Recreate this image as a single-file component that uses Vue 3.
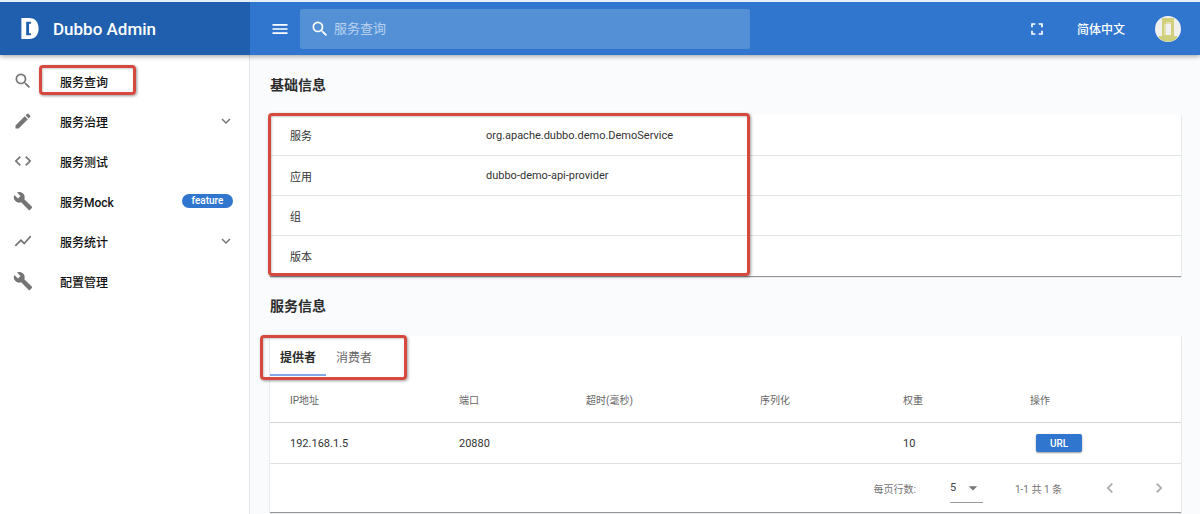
<script setup>
import { ref } from 'vue'

const icons = {
  search: 'M15.5 14h-.79l-.28-.27A6.47 6.47 0 0 0 16 9.5 6.5 6.5 0 1 0 9.5 16c1.61 0 3.09-.59 4.23-1.57l.27.28v.79l5 4.99L20.49 19l-4.99-5zm-6 0C7.01 14 5 11.99 5 9.5S7.01 5 9.5 5 14 7.01 14 9.5 11.99 14 9.5 14z',
  edit: 'M3 17.25V21h3.75L17.81 9.94l-3.75-3.75L3 17.25zM20.71 7.04a1 1 0 0 0 0-1.41l-2.34-2.34a1 1 0 0 0-1.41 0l-1.83 1.83 3.75 3.75 1.83-1.83z',
  code: 'M9.4 16.6L4.8 12l4.6-4.6L8 6l-6 6 6 6 1.4-1.4zm5.2 0l4.6-4.6-4.6-4.6L16 6l6 6-6 6-1.4-1.4z',
  build: 'M22.7 19l-9.1-9.1c.9-2.3.4-5-1.5-6.9-2-2-5-2.4-7.4-1.3L9 6 6 9 1.6 4.7C.4 7.1.9 10.1 2.9 12.1c1.9 1.9 4.6 2.4 6.9 1.5l9.1 9.1c.4.4 1 .4 1.4 0l2.3-2.3c.5-.4.5-1.1.1-1.4z',
  chart: 'M3.5 18.49l6-6.01 4 4L22 6.92l-1.41-1.41-7.09 7.97-4-4L2 16.99z',
  down: 'M7.41 8.59L12 13.17l4.59-4.58L18 10l-6 6-6-6 1.41-1.41z',
  menu: 'M3 18h18v-2H3v2zm0-5h18v-2H3v2zm0-7v2h18V6H3z',
  full: 'M7 14H5v5h5v-2H7v-3zm-2-4h2V7h3V5H5v5zm12 7h-3v2h5v-5h-2v3zM14 5v2h3v3h2V5h-5z',
  left: 'M15.41 7.41L14 6l-6 6 6 6 1.41-1.41L10.83 12z',
  right: 'M10 6L8.59 7.41 13.17 12l-4.58 4.59L10 18l6-6z',
  caret: 'M7 10l5 5 5-5z'
}

const menu = [
  { text: '服务查询', icon: 'search', marked: true },
  { text: '服务治理', icon: 'edit', group: true },
  { text: '服务测试', icon: 'code' },
  { text: '服务Mock', icon: 'build', badge: 'feature' },
  { text: '服务统计', icon: 'chart', group: true },
  { text: '配置管理', icon: 'build' }
]

const basic = [
  ['服务', 'org.apache.dubbo.demo.DemoService'],
  ['应用', 'dubbo-demo-api-provider'],
  ['组', ''],
  ['版本', '']
]

const headers = ['IP地址', '端口', '超时(毫秒)', '序列化', '权重', '操作']
const providers = [{ ip: '192.168.1.5', port: 20880, timeout: '', serial: '', weight: 10 }]
const tabs = ['提供者', '消费者']
const tab = ref(0)
const filter = ref('')
const rows = ref(5)
</script>

<template>
  <div class="app">
    <header class="top">
      <div class="brand">
        <svg class="logo" viewBox="0 0 20 22" aria-hidden="true">
          <path fill="#fff" fill-rule="evenodd" d="M1 0h8c7 0 10 5 10 11s-3 11-10 11H1zM6 4v14h5v-2H9V6h2V4z" />
        </svg>
        <span>Dubbo Admin</span>
      </div>
      <div class="bar">
        <button class="icon-btn" aria-label="菜单">
          <svg class="i20" viewBox="0 0 24 24"><path :d="icons.menu" /></svg>
        </button>
        <label class="search">
          <svg class="i20" viewBox="0 0 24 24"><path :d="icons.search" /></svg>
          <input v-model="filter" type="text" placeholder="服务查询" aria-label="服务查询" />
        </label>
        <div class="actions">
          <button class="icon-btn" aria-label="全屏">
            <svg class="i20" viewBox="0 0 24 24"><path :d="icons.full" /></svg>
          </button>
          <button class="lang">简体中文</button>
          <button class="icon-btn" aria-label="用户">
            <svg class="avatar" viewBox="0 0 26 26">
              <circle cx="13" cy="13" r="13" fill="#f0f0ee" />
              <path fill="#d0cf7c" fill-rule="evenodd" d="M7 2h12v18h3v2a13 13 0 0 1-18 0v-2h3zM11 6v13h5V6z" />
              <path fill="#e2e1ae" d="M11 6h5v2h-5zM9 8h2v11H9z" />
            </svg>
          </button>
        </div>
      </div>
    </header>

    <div class="body">
      <nav class="side">
        <a v-for="m in menu" :key="m.text" href="#" class="item">
          <svg class="i20" viewBox="0 0 24 24"><path :d="icons[m.icon]" /></svg>
          <span class="item-text">{{ m.text }}</span>
          <svg v-if="m.group" class="i18" viewBox="0 0 24 24"><path :d="icons.down" /></svg>
          <span v-if="m.badge" class="badge">{{ m.badge }}</span>
          <span v-if="m.marked" class="mark mark-nav"></span>
        </a>
      </nav>

      <main class="main">
        <h3>基础信息</h3>
        <section class="card">
          <table class="basic">
            <tbody>
              <tr v-for="r in basic" :key="r[0]">
                <th scope="row">{{ r[0] }}</th>
                <td>{{ r[1] }}</td>
              </tr>
            </tbody>
          </table>
          <span class="mark mark-basic"></span>
        </section>

        <h3>服务信息</h3>
        <section class="card">
          <div class="tabs" role="tablist">
            <button
              v-for="(t, i) in tabs"
              :key="t"
              role="tab"
              class="tab"
              :class="{ active: tab === i }"
              :aria-selected="tab === i"
              @click="tab = i"
            >{{ t }}</button>
          </div>
          <table class="list">
            <colgroup>
              <col class="c-ip" /><col class="c-port" /><col class="c-timeout" />
              <col class="c-serial" /><col class="c-weight" /><col class="c-op" />
            </colgroup>
            <thead>
              <tr><th v-for="h in headers" :key="h" scope="col">{{ h }}</th></tr>
            </thead>
            <tbody>
              <tr v-for="p in providers" :key="p.ip">
                <td>{{ p.ip }}</td>
                <td>{{ p.port }}</td>
                <td>{{ p.timeout }}</td>
                <td>{{ p.serial }}</td>
                <td>{{ p.weight }}</td>
                <td><button class="url">URL</button></td>
              </tr>
            </tbody>
          </table>
          <div class="pager">
            <label for="rows">每页行数:</label>
            <div class="select">
              <select id="rows" v-model="rows">
                <option :value="5">5</option>
                <option :value="10">10</option>
                <option :value="25">25</option>
              </select>
              <svg class="i20" viewBox="0 0 24 24"><path :d="icons.caret" /></svg>
            </div>
            <span class="range">1-1 共 1 条</span>
            <button class="page" aria-label="上一页" disabled>
              <svg class="i20" viewBox="0 0 24 24"><path :d="icons.left" /></svg>
            </button>
            <button class="page" aria-label="下一页" disabled>
              <svg class="i20" viewBox="0 0 24 24"><path :d="icons.right" /></svg>
            </button>
          </div>
          <span class="mark mark-tabs"></span>
        </section>
      </main>
    </div>
  </div>
</template>

<style>
body {
  background: #fafbfd;
}
</style>

<style scoped>
.app {
  min-height: 100vh;
  display: flex;
  flex-direction: column;
  font-family: Roboto, "Noto Sans CJK SC", sans-serif;
  font-size: 11px;
  color: #333;
}
button,
input,
select {
  font: inherit;
  color: inherit;
  background: none;
  border: 0;
  padding: 0;
  margin: 0;
}
svg {
  display: block;
  flex: none;
  fill: currentColor;
}
.i20 {
  width: 20px;
  height: 20px;
}
.i18 {
  width: 18px;
  height: 18px;
}

.top {
  display: flex;
  height: 53px;
  border-top: 2px solid #e6eff7;
  background: #3076ce;
  color: #fff;
  box-shadow: 0 1px 5px rgba(0, 0, 0, 0.4);
  position: relative;
}
.brand {
  width: 250px;
  flex: none;
  box-sizing: border-box;
  padding-left: 20px;
  display: flex;
  align-items: center;
  gap: 13px;
  background: #205fae;
  font-size: 17px;
  font-weight: 500;
}
.logo {
  width: 20px;
  height: 21px;
}
.bar {
  flex: 1;
  display: flex;
  align-items: center;
  padding: 0 19px 0 20px;
}
.search {
  flex: 0 1 450px;
  height: 40px;
  margin-left: 10px;
  box-sizing: border-box;
  padding-left: 10px;
  display: flex;
  align-items: center;
  gap: 4px;
  border-radius: 2px;
  background: #5490d6;
}
.search input {
  flex: 1;
  min-width: 0;
  font-size: 13px;
  outline: none;
}
.search input::placeholder {
  color: #b9d2ef;
  opacity: 1;
}
.actions {
  margin-left: auto;
  display: flex;
  align-items: center;
  gap: 30px;
}
.lang {
  font-size: 12px;
  font-weight: 500;
}
.avatar {
  width: 26px;
  height: 26px;
}

.body {
  flex: 1;
  display: flex;
}
.side {
  width: 250px;
  flex: none;
  box-sizing: border-box;
  padding-top: 6px;
  background: #fff;
  border-right: 1px solid #e3e6e8;
}
.item {
  position: relative;
  height: 40px;
  padding: 0 14px 0 13px;
  display: flex;
  align-items: center;
  color: #757575;
  text-decoration: none;
}
.item-text {
  flex: 1;
  margin-left: 27px;
  font-size: 12px;
  font-weight: 500;
  color: #111;
}
.badge {
  width: 51px;
  margin-right: 2px;
  height: 14px;
  line-height: 14px;
  border-radius: 7px;
  background: #3076ce;
  color: #fff;
  font-size: 10px;
  font-weight: 500;
  text-align: center;
}

.main {
  flex: 1;
  min-width: 0;
  padding: 0 19px 0 20px;
}
h3 {
  margin: 20px 0;
  font-size: 14px;
  line-height: 20px;
  font-weight: 700;
  color: #2c2c2c;
}
.card {
  position: relative;
  background: #fff;
  box-shadow: 0 1px 1px rgba(0, 0, 0, 0.4);
}
table {
  width: 100%;
  border-collapse: separate;
  border-spacing: 0;
  table-layout: fixed;
}
th,
td {
  padding: 0 0 0 20px;
  text-align: left;
  font-weight: 400;
}
.basic th,
.basic td {
  height: 39px;
  border-bottom: 1px solid #e0e3e3;
}
.basic tr:first-child > *,
.basic tr:last-child > * {
  height: 40px;
}
.basic tr:last-child > * {
  border-bottom: 0;
}
.basic th {
  width: 176px;
}

.tabs {
  display: flex;
  height: 40px;
}
.tab {
  padding: 0 10px;
  font-size: 12px;
  color: #666;
  border-bottom: 2px solid transparent;
  border-top: 2px solid transparent;
}
.tab.active {
  font-weight: 700;
  color: #2c2c2c;
  border-bottom-color: #82a9ea;
}
.list th {
  height: 46px;
  font-size: 10px;
  color: #666;
  border-bottom: 1px solid #d3d5d5;
}
.list td {
  height: 40px;
  border-bottom: 1px solid #dfe1e1;
}
.c-ip { width: 169px; }
.c-port { width: 127px; }
.c-timeout { width: 174px; }
.c-serial { width: 143px; }
.c-weight { width: 127px; }
.c-op { width: 171px; }
.url {
  display: block;
  width: 46px;
  height: 18px;
  margin-left: 6px;
  border-radius: 2px;
  background: #3076ce;
  color: #fff;
  font-size: 10px;
  font-weight: 500;
  box-shadow: 0 1px 2px rgba(0, 0, 0, 0.4);
}
.pager {
  height: 48px;
  padding-right: 12px;
  display: flex;
  align-items: center;
  justify-content: flex-end;
  font-size: 10px;
  color: #757575;
}
.select {
  display: grid;
  width: 33px;
  height: 28px;
  margin: 0 32px 0 34px;
  border-bottom: 1px solid #9a9a9a;
  color: #444;
}
.select select,
.select svg {
  grid-area: 1 / 1;
  align-self: center;
}
.select select {
  appearance: none;
  outline: none;
  font-size: 11px;
}
.select svg {
  justify-self: end;
  pointer-events: none;
  color: #757575;
}
.range {
  margin-right: 38px;
}
.page {
  color: #a8a8a8;
}
.page + .page {
  margin-left: 29px;
}

.mark {
  position: absolute;
  box-sizing: border-box;
  border: 3px solid #d6493f;
  border-radius: 4px;
  box-shadow: 1px 1px 3px rgba(0, 0, 0, 0.4), inset 1px 1px 2px rgba(0, 0, 0, 0.2);
  pointer-events: none;
}
.mark-nav {
  left: 39px;
  top: 4px;
  width: 97px;
  height: 30px;
}
.mark-basic {
  left: -2px;
  top: -2px;
  width: 482px;
  height: 163px;
}
.mark-tabs {
  left: -10px;
  top: -1px;
  width: 147px;
  height: 45px;
}
</style>
